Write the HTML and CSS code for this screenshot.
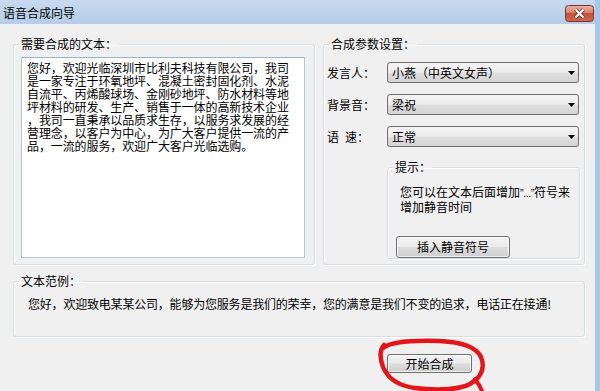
FILE: index.html
```html
<!DOCTYPE html>
<html lang="zh-CN">
<head>
<meta charset="utf-8">
<title>语音合成向导</title>
<link rel="stylesheet" href="styles.css">
</head>
<body>
<div class="window">
  <div class="titlebar">
    <span class="title">语音合成向导</span>
    <span class="close">
      <svg width="29" height="17" viewBox="0 0 29 17">
        <defs>
          <linearGradient id="cg" x1="0" y1="0" x2="0" y2="1">
            <stop offset="0" stop-color="#eab3a6"/>
            <stop offset="0.45" stop-color="#d9806f"/>
            <stop offset="0.5" stop-color="#c4503b"/>
            <stop offset="1" stop-color="#cf6a50"/>
          </linearGradient>
        </defs>
        <rect x="0.5" y="0.5" width="28" height="16" rx="3" fill="url(#cg)" stroke="#7a3528"/>
        <path d="M10.5 4.5 L18.5 12.5 M18.5 4.5 L10.5 12.5" stroke="#6a2a20" stroke-width="3.8"/>
        <path d="M10.5 4.5 L18.5 12.5 M18.5 4.5 L10.5 12.5" stroke="#ffffff" stroke-width="2.2"/>
      </svg>
    </span>
  </div>
  <div class="client">
    <div class="top-row">
      <fieldset class="group text-group">
        <legend>需要合成的文本：</legend>
        <div class="textbox">您好，欢迎光临深圳市比利夫科技有限公司，我司<br>是一家专注于环氧地坪、混凝土密封固化剂、水泥<br>自流平、丙烯酸球场、金刚砂地坪、防水材料等地<br>坪材料的研发、生产、销售于一体的高新技术企业<br>，我司一直秉承以品质求生存，以服务求发展的经<br>营理念，以客户为中心，为广大客户提供一流的产<br>品，一流的服务，欢迎广大客户光临选购。</div>
      </fieldset>
      <fieldset class="group param-group">
        <legend>合成参数设置：</legend>
        <div class="fields">
          <div class="field">
            <span class="label">发言人：</span>
            <div class="combo"><span>小燕（中英文女声）</span><svg class="arrow" width="7" height="4" viewBox="0 0 7 4"><path d="M0 0 H7 L3.5 4 Z" fill="#000"/></svg></div>
          </div>
          <div class="field">
            <span class="label">背景音：</span>
            <div class="combo"><span>梁祝</span><svg class="arrow" width="7" height="4" viewBox="0 0 7 4"><path d="M0 0 H7 L3.5 4 Z" fill="#000"/></svg></div>
          </div>
          <div class="field">
            <span class="label">语<span class="sp"></span>速：</span>
            <div class="combo"><span>正常</span><svg class="arrow" width="7" height="4" viewBox="0 0 7 4"><path d="M0 0 H7 L3.5 4 Z" fill="#000"/></svg></div>
          </div>
        </div>
        <fieldset class="group tip-group">
          <legend>提示：</legend>
          <p class="tip">您可以在文本后面增加<span class="q">”...”</span>符号来<br>增加静音时间</p>
          <button class="btn insert">插入静音符号</button>
        </fieldset>
      </fieldset>
    </div>
    <fieldset class="group sample-group">
      <legend>文本范例：</legend>
      <p class="sample">您好，欢迎致电某某公司，能够为您服务是我们的荣幸，您的满意是我们不变的追求，电话正在接通!</p>
    </fieldset>
    <div class="footer">
      <button class="btn start">开始合成</button>
      <svg class="mark" width="125" height="60" viewBox="0 0 125 60">
        <path d="M13 11 C20 5 42 3 70 4 C88 5 106 9 111 20 C115 30 112 40 100 47 C90 52 70 54 45 51 C30 49 18 42 13 30 C10 22 9 14 14 8" fill="none" stroke="#e3151a" stroke-width="4.5" stroke-linecap="round"/>
        <path d="M105 42 C108 46 111 50 113 57" fill="none" stroke="#e3151a" stroke-width="4" stroke-linecap="round"/>
      </svg>
    </div>
  </div>
</div>
</body>
</html>
```

FILE: styles.css
```css
* {
  box-sizing: border-box;
}

html, body {
  margin: 0;
  padding: 0;
}

body {
  width: 600px;
  height: 391px;
  overflow: hidden;
  background: #f0f0f0;
  font-family: "Noto Sans CJK SC", "Noto Sans", sans-serif;
  font-size: 12px;
  color: #000;
}

.window {
  width: 600px;
  height: 391px;
  background: #f0f0f0;
  border-right: 5px solid #a6c9ea;
  display: flex;
  flex-direction: column;
}

.titlebar {
  height: 24px;
  flex: none;
  display: flex;
  align-items: flex-start;
  justify-content: space-between;
  background: linear-gradient(to bottom, #c7daee 0%, #bfd4eb 50%, #b6cce7 100%);
}

.title {
  padding: 5px 0 0 3px;
  line-height: 16px;
  font-size: 12px;
  color: #000;
}

.close {
  display: block;
  width: 29px;
  height: 17px;
  margin: 5px 1px 0 0;
}

.close svg {
  display: block;
}

.client {
  flex: 1;
  padding: 13px 0 0 13px;
  display: flex;
  flex-direction: column;
}

.top-row {
  display: flex;
  align-items: flex-start;
  gap: 8px;
}

.group {
  margin: 0;
  min-width: 0;
  border: 1px solid #d5dfe5;
  border-radius: 3px;
  box-shadow: inset 1px 1px 0 #ffffff, 1px 1px 0 #ffffff;
}

.group > legend {
  padding: 0 2px;
  margin-left: -2px;
  line-height: 14px;
  font-size: 12px;
  color: #000;
}

.text-group {
  width: 302px;
  padding: 6px 9px 6px 7px;
}

.textbox {
  height: 201px;
  background: #ffffff;
  border: 1px solid #b7c5d3;
  border-top-color: #9fb1c4;
  padding: 3px 4px 0 5px;
  line-height: 13px;
  font-size: 12px;
  letter-spacing: -0.1px;
  white-space: nowrap;
  overflow: hidden;
}

.param-group {
  width: 262px;
  padding: 11px 4px 5px 3px;
}

.param-group > legend {
  margin-left: 2px;
}

.fields {
  display: flex;
  flex-direction: column;
  gap: 11px;
}

.field {
  display: flex;
  align-items: center;
  height: 21px;
}

.label {
  width: 60px;
  flex: none;
  line-height: 14px;
}

.sp {
  display: inline-block;
  width: 6px;
}

.combo {
  width: 192px;
  height: 21px;
  display: flex;
  align-items: center;
  justify-content: space-between;
  padding: 0 3px 0 4px;
  border: 1px solid #707070;
  border-radius: 3px;
  background: linear-gradient(to bottom, #f4f4f4 0%, #ececec 48%, #dfdfdf 52%, #d3d3d3 100%);
  line-height: 14px;
}

.arrow {
  display: block;
  flex: none;
}

.tip-group {
  width: 193px;
  margin: 13px 0 0 60px;
  padding: 11px 4px 0 8px;
}

.tip-group > legend {
  margin-left: -2px;
  padding: 0 1px;
}

.tip {
  margin: 0 0 23px 4px;
  line-height: 13px;
  white-space: nowrap;
}

.q {
  font-family: "Liberation Sans", "DejaVu Sans", sans-serif;
  font-size: 11px;
  letter-spacing: -0.5px;
}

.btn {
  display: block;
  margin: 0;
  padding: 0;
  font-family: "Noto Sans CJK SC", "Noto Sans", sans-serif;
  font-size: 12px;
  color: #000;
  line-height: 14px;
  border: 1px solid #707070;
  border-radius: 3px;
  background: linear-gradient(to bottom, #f2f2f2 0%, #ebebeb 48%, #dddddd 52%, #cfcfcf 100%);
  box-shadow: inset 0 0 0 1px rgba(255, 255, 255, 0.7);
}

.insert {
  width: 114px;
  height: 22px;
}

.sample-group {
  width: 572px;
  margin-top: 9px;
  padding: 9px 4px 25px 7px;
}

.sample {
  margin: 0 0 0 7px;
  line-height: 14px;
  letter-spacing: -0.2px;
  white-space: nowrap;
}

.footer {
  position: relative;
  flex: 1;
  padding: 17px 0 0 374px;
}

.start {
  width: 85px;
  height: 19px;
}

.mark {
  position: absolute;
  left: 357px;
  top: 0;
  overflow: visible;
}
```
